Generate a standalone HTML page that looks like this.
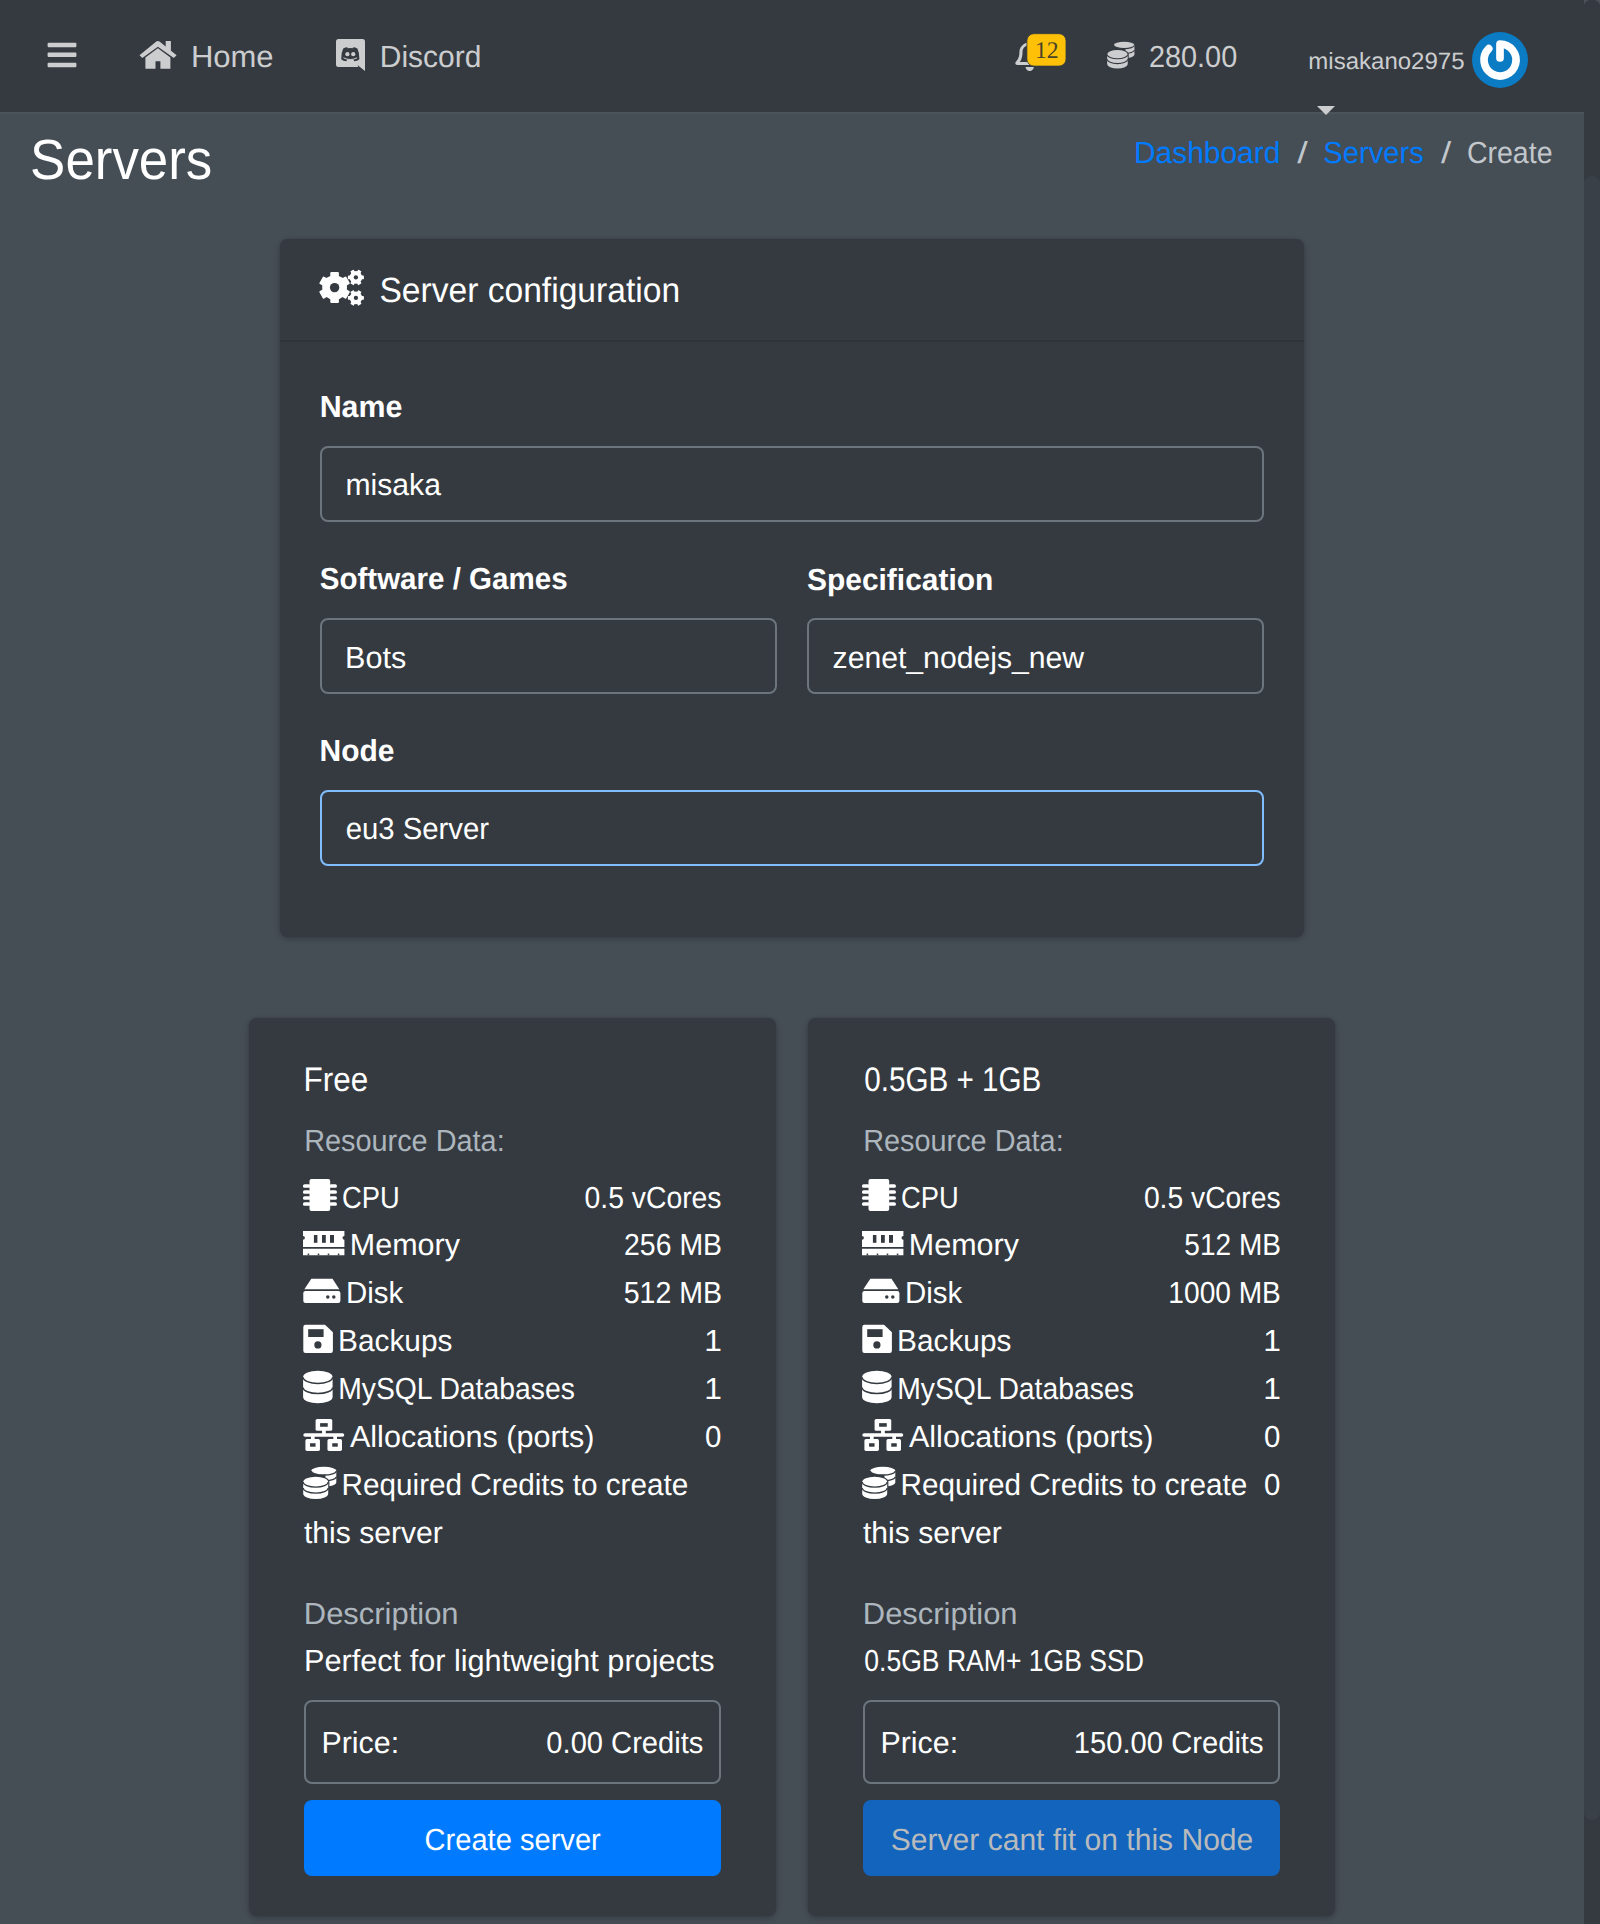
<!DOCTYPE html>
<html><head><meta charset="utf-8"><title>Servers</title>
<style>
html,body{margin:0;padding:0;}
body{width:1600px;height:1924px;overflow:hidden;background:#454d55;position:relative;font-family:'Liberation Sans',sans-serif;}
.t{position:absolute;white-space:nowrap;line-height:1;transform-origin:0 50%;text-rendering:geometricPrecision;}
.box{position:absolute;box-sizing:border-box;}
svg{position:absolute;overflow:visible;}
</style></head><body>
<div class=box style="left:0;top:0;width:1584px;height:112px;background:#343a40;"></div>
<div class=box style="left:0;top:112px;width:1584px;height:2px;background:#4b545c;"></div>
<div class=box style="left:1584px;top:0;width:16px;height:8px;background:#4a525a;"></div>
<div class=box style="left:1584px;top:0;width:16px;height:1924px;background:#343a40;border-radius:6px 6px 0 0;"></div>
<div class=box style="left:1584px;top:176px;width:16px;height:1644px;background:#3a4047;border-radius:8px;"></div>
<div class=box style="left:280px;top:239px;width:1024px;height:698px;background:#343a40;border-radius:8px;box-shadow:0 0 2px rgba(0,0,0,.125),0 2px 6px rgba(0,0,0,.2);"></div>
<div class=box style="left:280px;top:339px;width:1024px;height:1px;background:#383d44;"></div>
<div class=box style="left:280px;top:340px;width:1024px;height:1px;background:#2d3237;"></div>
<div class=box style="left:280px;top:341px;width:1024px;height:1px;background:#30353b;"></div>
<div class=box style="left:320px;top:446px;width:944px;height:76px;border:2px solid #6c757d;border-radius:8px;"></div>
<div class=box style="left:320px;top:618px;width:457px;height:76px;border:2px solid #6c757d;border-radius:8px;"></div>
<div class=box style="left:807px;top:618px;width:457px;height:76px;border:2px solid #6c757d;border-radius:8px;"></div>
<div class=box style="left:320px;top:790px;width:944px;height:76px;border:2px solid #80bdff;border-radius:8px;"></div>
<div class=box style="left:249px;top:1018px;width:527px;height:898px;background:#343a40;border-radius:8px;box-shadow:0 0 2px rgba(0,0,0,.125),0 2px 6px rgba(0,0,0,.2);"></div>
<div class=box style="left:808px;top:1018px;width:527px;height:898px;background:#343a40;border-radius:8px;box-shadow:0 0 2px rgba(0,0,0,.125),0 2px 6px rgba(0,0,0,.2);"></div>
<div class=box style="left:304px;top:1700px;width:417px;height:84px;border:2px solid #6c757d;border-radius:8px;"></div>
<div class=box style="left:863px;top:1700px;width:417px;height:84px;border:2px solid #6c757d;border-radius:8px;"></div>
<div class=box style="left:304px;top:1800px;width:417px;height:76px;background:#007bff;border-radius:8px;"></div>
<div class=box style="left:863px;top:1800px;width:417px;height:76px;background:#1264bc;border-radius:8px;"></div>

<svg style="left:0;top:0" width="1600" height="1924" viewBox="0 0 1600 1924">
<rect x="47.6" y="42.75" width="28.8" height="4.4" rx="1" fill="#cccdcf"/>
<rect x="47.6" y="52.6" width="28.8" height="4.4" rx="1" fill="#cccdcf"/>
<rect x="47.6" y="62.75" width="28.8" height="4.4" rx="1" fill="#cccdcf"/>
<path fill="#cccdcf" d="M139.5,55.3 L156.3,41.4 Q157.9,40.5 159.5,41.4 L176.6,55.3 L173.8,57.9 L157.9,46.7 L142.3,57.9 Z"/>
<path fill="#cccdcf" d="M165.7,41 H170.9 V52.5 L165.7,48.5 Z"/>
<path fill="#cccdcf" d="M145.4,57.4 L157.9,48.2 L170.4,57.4 V68.7 H160.4 V61.2 H155.5 V68.7 H145.4 Z"/>
<path fill="#cccdcf" d="M338.5,39 H362.5 Q365,39 365,41.5 V71 L357.5,65 L358.3,67 H338.5 Q336,67 336,64.5 V41.5 Q336,39 338.5,39 Z"/>
<path fill="#343a40" d="M343.2,48.6 Q345.5,47.3 347.3,47.3 L347.8,48.3 Q350.3,47.9 352.8,48.3 L353.3,47.3 Q355.1,47.3 357.4,48.6 Q359.6,53 359.4,59.3 Q357.3,61.2 354.3,61.2 L353.2,59.2 Q350.3,60 347.4,59.2 L346.3,61.2 Q343.3,61.2 341.2,59.3 Q341,53 343.2,48.6 Z"/>
<path fill="none" stroke="#cccdcf" stroke-width="1" d="M343.5,57.8 Q350.3,61.3 357.1,57.8"/>
<circle cx="347.4" cy="54.2" r="2.1" fill="#cccdcf"/><circle cx="353.25" cy="54.2" r="2.1" fill="#cccdcf"/>
<g transform="translate(1015.3,39.1) scale(0.0643,0.0625)"><path fill="#cccdcf" d="M439.39 362.29c-19.32-20.76-55.47-51.99-55.47-154.29 0-77.7-54.48-139.9-127.94-155.16V32c0-17.67-14.32-32-31.98-32s-31.98 14.33-31.98 32v20.84C118.56 68.1 64.08 130.3 64.08 208c0 102.3-36.150 133.53-55.47 154.29-6 6.45-8.66 14.160-8.61 21.71.11 16.4 12.98 32 32.1 32h383.8c19.12 0 32-15.6 32.1-32 .05-7.55-2.61-15.27-8.61-21.71zM67.53 368c21.22-27.970 44.42-74.330 44.53-159.42 0-.2-.06-.38-.06-.58 0-61.86 50.14-112 112-112s112 50.14 112 112c0 .2-.06.38-.06.58.11 85.1 23.31 131.46 44.53 159.42H67.53zM224 512c35.32 0 63.97-28.65 63.97-64H160.03c0 35.35 28.65 64 63.97 64z"/></g>
<rect x="1026.9" y="33.7" width="39.1" height="32.4" rx="7" fill="#ffc107" stroke="#343a40" stroke-width="0.8"/>
<clipPath id="cl12"><rect x="1125.48" y="45.24" width="100" height="100"/></clipPath>
<ellipse cx="1124.12" cy="45.24" rx="10.30" ry="3.38" fill="#cccdcf"/>
<path d="M1113.82,45.24 A10.30,3.38 0 0 1 1134.42,45.24 L1134.42,54.80 A10.30,3.38 0 0 1 1113.82,54.80 Z" fill="#cccdcf" clip-path="url(#cl12)"/>
<path d="M1113.82,45.24 A10.30,3.38 0 0 0 1134.42,45.24" fill="none" stroke="#343a40" stroke-width="1.07"/>
<path d="M1113.82,50.10 A10.30,3.38 0 0 0 1134.42,50.10" fill="none" stroke="#343a40" stroke-width="1.07"/>
<path d="M1107.14,54.38 A10.30,4.28 0 0 1 1127.74,54.38 L1127.74,64.11 A10.30,4.28 0 0 1 1107.14,64.11 Z" fill="#343a40" stroke="#343a40" stroke-width="1.98"/>
<path d="M1107.14,54.38 A10.30,4.28 0 0 1 1127.74,54.38 L1127.74,64.11 A10.30,4.28 0 0 1 1107.14,64.11 Z" fill="#cccdcf"/>
<path d="M1107.14,54.38 A10.30,4.28 0 0 0 1127.74,54.38" fill="none" stroke="#343a40" stroke-width="1.07"/>
<path d="M1107.14,59.33 A10.30,4.28 0 0 0 1127.74,59.33" fill="none" stroke="#343a40" stroke-width="1.07"/>
<circle cx="1500" cy="60" r="28" fill="#0b7bc4"/>
<path d="M1500,58 L1500,44 A16,16 0 1 1 1488.7,48.7" fill="none" stroke="#fff" stroke-width="7.7" stroke-linecap="round" stroke-linejoin="round"/>
<path d="M1317,106 H1335 L1326,115 Z" fill="#cccdcf"/>
<circle cx="334.6" cy="287.6" r="12.4" fill="#ffffff"/>
<rect x="330.30" y="272.10" width="8.60" height="5.10" rx="1.03" fill="#ffffff" transform="rotate(0.0 334.6 287.6)"/>
<rect x="330.30" y="272.10" width="8.60" height="5.10" rx="1.03" fill="#ffffff" transform="rotate(60.0 334.6 287.6)"/>
<rect x="330.30" y="272.10" width="8.60" height="5.10" rx="1.03" fill="#ffffff" transform="rotate(120.0 334.6 287.6)"/>
<rect x="330.30" y="272.10" width="8.60" height="5.10" rx="1.03" fill="#ffffff" transform="rotate(180.0 334.6 287.6)"/>
<rect x="330.30" y="272.10" width="8.60" height="5.10" rx="1.03" fill="#ffffff" transform="rotate(240.0 334.6 287.6)"/>
<rect x="330.30" y="272.10" width="8.60" height="5.10" rx="1.03" fill="#ffffff" transform="rotate(300.0 334.6 287.6)"/>
<circle cx="334.6" cy="287.6" r="4.7" fill="#343a40"/>
<circle cx="355.9" cy="277.4" r="6.3" fill="#ffffff"/>
<rect x="354.00" y="269.40" width="3.80" height="3.70" rx="0.46" fill="#ffffff" transform="rotate(90.0 355.9 277.4)"/>
<rect x="354.00" y="269.40" width="3.80" height="3.70" rx="0.46" fill="#ffffff" transform="rotate(150.0 355.9 277.4)"/>
<rect x="354.00" y="269.40" width="3.80" height="3.70" rx="0.46" fill="#ffffff" transform="rotate(210.0 355.9 277.4)"/>
<rect x="354.00" y="269.40" width="3.80" height="3.70" rx="0.46" fill="#ffffff" transform="rotate(270.0 355.9 277.4)"/>
<rect x="354.00" y="269.40" width="3.80" height="3.70" rx="0.46" fill="#ffffff" transform="rotate(330.0 355.9 277.4)"/>
<rect x="354.00" y="269.40" width="3.80" height="3.70" rx="0.46" fill="#ffffff" transform="rotate(390.0 355.9 277.4)"/>
<circle cx="355.9" cy="277.4" r="2.15" fill="#343a40"/>
<circle cx="355.9" cy="297.9" r="6.3" fill="#ffffff"/>
<rect x="354.00" y="289.90" width="3.80" height="3.70" rx="0.46" fill="#ffffff" transform="rotate(90.0 355.9 297.9)"/>
<rect x="354.00" y="289.90" width="3.80" height="3.70" rx="0.46" fill="#ffffff" transform="rotate(150.0 355.9 297.9)"/>
<rect x="354.00" y="289.90" width="3.80" height="3.70" rx="0.46" fill="#ffffff" transform="rotate(210.0 355.9 297.9)"/>
<rect x="354.00" y="289.90" width="3.80" height="3.70" rx="0.46" fill="#ffffff" transform="rotate(270.0 355.9 297.9)"/>
<rect x="354.00" y="289.90" width="3.80" height="3.70" rx="0.46" fill="#ffffff" transform="rotate(330.0 355.9 297.9)"/>
<rect x="354.00" y="289.90" width="3.80" height="3.70" rx="0.46" fill="#ffffff" transform="rotate(390.0 355.9 297.9)"/>
<circle cx="355.9" cy="297.9" r="2.15" fill="#343a40"/>
<rect x="309.5" y="1179" width="20.7" height="32" rx="2" fill="#ffffff"/>
<rect x="303" y="1184.2" width="7.5" height="3.6" rx="1.6" fill="#ffffff"/>
<rect x="329.4" y="1184.2" width="7.5" height="3.6" rx="1.6" fill="#ffffff"/>
<rect x="303" y="1190.2" width="7.5" height="3.6" rx="1.6" fill="#ffffff"/>
<rect x="329.4" y="1190.2" width="7.5" height="3.6" rx="1.6" fill="#ffffff"/>
<rect x="303" y="1196.2" width="7.5" height="3.6" rx="1.6" fill="#ffffff"/>
<rect x="329.4" y="1196.2" width="7.5" height="3.6" rx="1.6" fill="#ffffff"/>
<rect x="303" y="1202.2" width="7.5" height="3.6" rx="1.6" fill="#ffffff"/>
<rect x="329.4" y="1202.2" width="7.5" height="3.6" rx="1.6" fill="#ffffff"/>
<path fill="#ffffff" d="M303,1230.9 H344.4 V1235.9 A1.9,1.9 0 0 0 344.4,1239.7 V1247 H303 V1239.7 A1.9,1.9 0 0 0 303,1235.9 Z"/>
<rect x="313.9" y="1235" width="3.5" height="7.8" fill="#343a40"/>
<rect x="322" y="1235" width="3.8000000000000114" height="7.8" fill="#343a40"/>
<rect x="330" y="1235" width="4" height="7.8" fill="#343a40"/>
<path fill="#ffffff" d="M303,1248.8 H344.4 V1255.2 H303 Z"/>
<rect x="307.59999999999997" y="1253.6" width="1.6" height="1.7" fill="#343a40"/>
<rect x="317.7" y="1253.6" width="1.6" height="1.7" fill="#343a40"/>
<rect x="327.7" y="1253.6" width="1.6" height="1.7" fill="#343a40"/>
<rect x="337.8" y="1253.6" width="1.6" height="1.7" fill="#343a40"/>
<path fill="#ffffff" d="M311.3,1278.8 H332.5 L339.3,1289.3 H304.4 Z"/>
<rect x="303.3" y="1291" width="37.1" height="12" rx="2.2" fill="#ffffff"/>
<circle cx="327.8" cy="1297" r="1.75" fill="#343a40"/><circle cx="333.8" cy="1297" r="1.75" fill="#343a40"/>
<path fill="#ffffff" d="M305.5,1324.8 H325 L332.9,1332.3 V1350.8 Q332.9,1353 330.7,1353 H305.5 Q303.3,1353 303.3,1350.8 V1327 Q303.3,1324.8 305.5,1324.8 Z"/>
<rect x="308.2" y="1329.2" width="15.4" height="7.8" fill="#343a40"/>
<circle cx="317.9" cy="1344.9" r="3.6" fill="#343a40"/>
<path fill="#ffffff" d="M303.1,1377 A14.75,6.2 0 0 1 332.6,1377 V1397 A14.75,6.2 0 0 1 303.1,1397 Z"/>
<path d="M303.1,1377.2 A14.75,6.2 0 0 0 332.6,1377.2" fill="none" stroke="#343a40" stroke-width="1.5"/>
<path d="M303.1,1387.4 A14.75,6.2 0 0 0 332.6,1387.4" fill="none" stroke="#343a40" stroke-width="1.5"/>
<rect x="315.6" y="1418.95" width="16.65" height="11.85" rx="1.6" fill="#ffffff"/>
<rect x="320.1" y="1423.15" width="7.65" height="3.6" fill="#343a40"/>
<rect x="322.05" y="1430" width="3.75" height="4" fill="#ffffff"/>
<rect x="303.3" y="1433.2" width="40.95" height="3.6" rx="1.8" fill="#ffffff"/>
<rect x="310.95" y="1436" width="3.7" height="4" fill="#ffffff"/>
<rect x="305.4" y="1439.05" width="14.55" height="11.85" rx="1.6" fill="#ffffff"/>
<rect x="310.05" y="1443.25" width="5.5" height="3.45" fill="#343a40"/>
<rect x="333.3" y="1436" width="3.7" height="4" fill="#ffffff"/>
<rect x="327.45" y="1439.05" width="14.55" height="11.85" rx="1.6" fill="#ffffff"/>
<rect x="332.25" y="1443.25" width="5.5" height="3.45" fill="#343a40"/>
<clipPath id="cl85"><rect x="325.45" y="1470.90" width="100" height="100"/></clipPath>
<ellipse cx="323.80" cy="1470.90" rx="12.50" ry="4.10" fill="#ffffff"/>
<path d="M311.30,1470.90 A12.50,4.10 0 0 1 336.30,1470.90 L336.30,1482.50 A12.50,4.10 0 0 1 311.30,1482.50 Z" fill="#ffffff" clip-path="url(#cl85)"/>
<path d="M311.30,1470.90 A12.50,4.10 0 0 0 336.30,1470.90" fill="none" stroke="#343a40" stroke-width="1.30"/>
<path d="M311.30,1476.80 A12.50,4.10 0 0 0 336.30,1476.80" fill="none" stroke="#343a40" stroke-width="1.30"/>
<path d="M303.20,1482.00 A12.50,5.20 0 0 1 328.20,1482.00 L328.20,1493.80 A12.50,5.20 0 0 1 303.20,1493.80 Z" fill="#343a40" stroke="#343a40" stroke-width="2.40"/>
<path d="M303.20,1482.00 A12.50,5.20 0 0 1 328.20,1482.00 L328.20,1493.80 A12.50,5.20 0 0 1 303.20,1493.80 Z" fill="#ffffff"/>
<path d="M303.20,1482.00 A12.50,5.20 0 0 0 328.20,1482.00" fill="none" stroke="#343a40" stroke-width="1.30"/>
<path d="M303.20,1488.00 A12.50,5.20 0 0 0 328.20,1488.00" fill="none" stroke="#343a40" stroke-width="1.30"/>
<rect x="868.5" y="1179" width="20.7" height="32" rx="2" fill="#ffffff"/>
<rect x="862" y="1184.2" width="7.5" height="3.6" rx="1.6" fill="#ffffff"/>
<rect x="888.4" y="1184.2" width="7.5" height="3.6" rx="1.6" fill="#ffffff"/>
<rect x="862" y="1190.2" width="7.5" height="3.6" rx="1.6" fill="#ffffff"/>
<rect x="888.4" y="1190.2" width="7.5" height="3.6" rx="1.6" fill="#ffffff"/>
<rect x="862" y="1196.2" width="7.5" height="3.6" rx="1.6" fill="#ffffff"/>
<rect x="888.4" y="1196.2" width="7.5" height="3.6" rx="1.6" fill="#ffffff"/>
<rect x="862" y="1202.2" width="7.5" height="3.6" rx="1.6" fill="#ffffff"/>
<rect x="888.4" y="1202.2" width="7.5" height="3.6" rx="1.6" fill="#ffffff"/>
<path fill="#ffffff" d="M862,1230.9 H903.4 V1235.9 A1.9,1.9 0 0 0 903.4,1239.7 V1247 H862 V1239.7 A1.9,1.9 0 0 0 862,1235.9 Z"/>
<rect x="872.9" y="1235" width="3.5" height="7.8" fill="#343a40"/>
<rect x="881" y="1235" width="3.8000000000000114" height="7.8" fill="#343a40"/>
<rect x="889" y="1235" width="4" height="7.8" fill="#343a40"/>
<path fill="#ffffff" d="M862,1248.8 H903.4 V1255.2 H862 Z"/>
<rect x="866.5999999999999" y="1253.6" width="1.6" height="1.7" fill="#343a40"/>
<rect x="876.7" y="1253.6" width="1.6" height="1.7" fill="#343a40"/>
<rect x="886.7" y="1253.6" width="1.6" height="1.7" fill="#343a40"/>
<rect x="896.8" y="1253.6" width="1.6" height="1.7" fill="#343a40"/>
<path fill="#ffffff" d="M870.3,1278.8 H891.5 L898.3,1289.3 H863.4 Z"/>
<rect x="862.3" y="1291" width="37.1" height="12" rx="2.2" fill="#ffffff"/>
<circle cx="886.8" cy="1297" r="1.75" fill="#343a40"/><circle cx="892.8" cy="1297" r="1.75" fill="#343a40"/>
<path fill="#ffffff" d="M864.5,1324.8 H884 L891.9,1332.3 V1350.8 Q891.9,1353 889.7,1353 H864.5 Q862.3,1353 862.3,1350.8 V1327 Q862.3,1324.8 864.5,1324.8 Z"/>
<rect x="867.2" y="1329.2" width="15.4" height="7.8" fill="#343a40"/>
<circle cx="876.9" cy="1344.9" r="3.6" fill="#343a40"/>
<path fill="#ffffff" d="M862.1,1377 A14.75,6.2 0 0 1 891.6,1377 V1397 A14.75,6.2 0 0 1 862.1,1397 Z"/>
<path d="M862.1,1377.2 A14.75,6.2 0 0 0 891.6,1377.2" fill="none" stroke="#343a40" stroke-width="1.5"/>
<path d="M862.1,1387.4 A14.75,6.2 0 0 0 891.6,1387.4" fill="none" stroke="#343a40" stroke-width="1.5"/>
<rect x="874.6" y="1418.95" width="16.65" height="11.85" rx="1.6" fill="#ffffff"/>
<rect x="879.1" y="1423.15" width="7.65" height="3.6" fill="#343a40"/>
<rect x="881.05" y="1430" width="3.75" height="4" fill="#ffffff"/>
<rect x="862.3" y="1433.2" width="40.95" height="3.6" rx="1.8" fill="#ffffff"/>
<rect x="869.95" y="1436" width="3.7" height="4" fill="#ffffff"/>
<rect x="864.4" y="1439.05" width="14.55" height="11.85" rx="1.6" fill="#ffffff"/>
<rect x="869.05" y="1443.25" width="5.5" height="3.45" fill="#343a40"/>
<rect x="892.3" y="1436" width="3.7" height="4" fill="#ffffff"/>
<rect x="886.45" y="1439.05" width="14.55" height="11.85" rx="1.6" fill="#ffffff"/>
<rect x="891.25" y="1443.25" width="5.5" height="3.45" fill="#343a40"/>
<clipPath id="cl131"><rect x="884.45" y="1470.90" width="100" height="100"/></clipPath>
<ellipse cx="882.80" cy="1470.90" rx="12.50" ry="4.10" fill="#ffffff"/>
<path d="M870.30,1470.90 A12.50,4.10 0 0 1 895.30,1470.90 L895.30,1482.50 A12.50,4.10 0 0 1 870.30,1482.50 Z" fill="#ffffff" clip-path="url(#cl131)"/>
<path d="M870.30,1470.90 A12.50,4.10 0 0 0 895.30,1470.90" fill="none" stroke="#343a40" stroke-width="1.30"/>
<path d="M870.30,1476.80 A12.50,4.10 0 0 0 895.30,1476.80" fill="none" stroke="#343a40" stroke-width="1.30"/>
<path d="M862.20,1482.00 A12.50,5.20 0 0 1 887.20,1482.00 L887.20,1493.80 A12.50,5.20 0 0 1 862.20,1493.80 Z" fill="#343a40" stroke="#343a40" stroke-width="2.40"/>
<path d="M862.20,1482.00 A12.50,5.20 0 0 1 887.20,1482.00 L887.20,1493.80 A12.50,5.20 0 0 1 862.20,1493.80 Z" fill="#ffffff"/>
<path d="M862.20,1482.00 A12.50,5.20 0 0 0 887.20,1482.00" fill="none" stroke="#343a40" stroke-width="1.30"/>
<path d="M862.20,1488.00 A12.50,5.20 0 0 0 887.20,1488.00" fill="none" stroke="#343a40" stroke-width="1.30"/>
</svg>
<div class=t style="left:190px;top:42px;font-size:30.5px;color:#cccdcf;font-weight:400;font-family:'Liberation Sans',sans-serif;transform:translate(0.888px,0.000px) scaleX(1.0167);">Home</div>
<div class=t style="left:379px;top:42px;font-size:30.5px;color:#cccdcf;font-weight:400;font-family:'Liberation Sans',sans-serif;transform:translate(0.779px,0.000px) scaleX(0.9829);">Discord</div>
<div class=t style="left:1148px;top:42px;font-size:30.5px;color:#cccdcf;font-weight:400;font-family:'Liberation Sans',sans-serif;transform:translate(0.933px,0.000px) scaleX(0.9465);">280.00</div>
<div class=t style="left:1308px;top:50px;font-size:23.52px;color:#cccdcf;font-weight:400;font-family:'Liberation Sans',sans-serif;transform:translate(0.345px,0.000px) scaleX(1.0211);">misakano2975</div>
<div class=t style="left:1034px;top:40px;font-size:23.91px;color:#4a4428;font-weight:400;font-family:'Liberation Serif',serif;transform:translate(0.894px,0.000px) scaleX(0.9926);">12</div>
<div class=t style="left:30px;top:133px;font-size:56.68px;color:#fff;font-weight:400;font-family:'Liberation Sans',sans-serif;transform:translate(0.117px,0.000px) scaleX(0.9331);">Servers</div>
<div class=t style="left:1133px;top:138px;font-size:30.5px;color:#007bff;font-weight:400;font-family:'Liberation Sans',sans-serif;transform:translate(0.922px,0.000px) scaleX(0.9811);">Dashboard</div>
<div class=t style="left:1297px;top:138px;font-size:30.5px;color:#c2c7cc;font-weight:400;font-family:'Liberation Sans',sans-serif;transform:translate(0.136px,0.000px) scaleX(1.2353);">/</div>
<div class=t style="left:1323px;top:138px;font-size:30.5px;color:#007bff;font-weight:400;font-family:'Liberation Sans',sans-serif;transform:translate(0.252px,0.000px) scaleX(0.9570);">Servers</div>
<div class=t style="left:1440px;top:138px;font-size:30.5px;color:#c2c7cc;font-weight:400;font-family:'Liberation Sans',sans-serif;transform:translate(0.985px,0.000px) scaleX(1.2081);">/</div>
<div class=t style="left:1466px;top:138px;font-size:30.5px;color:#c2c7cc;font-weight:400;font-family:'Liberation Sans',sans-serif;transform:translate(0.883px,0.000px) scaleX(0.9352);">Create</div>
<div class=t style="left:379px;top:274px;font-size:34.93px;color:#fff;font-weight:400;font-family:'Liberation Sans',sans-serif;transform:translate(0.395px,0.000px) scaleX(0.9621);">Server configuration</div>
<div class=t style="left:319px;top:392px;font-size:30.5px;color:#fff;font-weight:700;font-family:'Liberation Sans',sans-serif;transform:translate(0.671px,0.000px) scaleX(0.9956);">Name</div>
<div class=t style="left:345px;top:470px;font-size:30.5px;color:#fff;font-weight:400;font-family:'Liberation Sans',sans-serif;transform:translate(0.427px,0.000px) scaleX(0.9886);">misaka</div>
<div class=t style="left:319px;top:564px;font-size:30.5px;color:#fff;font-weight:700;font-family:'Liberation Sans',sans-serif;transform:translate(0.693px,0.000px) scaleX(0.9689);">Software / Games</div>
<div class=t style="left:806px;top:565px;font-size:30.5px;color:#fff;font-weight:700;font-family:'Liberation Sans',sans-serif;transform:translate(0.986px,0.000px) scaleX(0.9815);">Specification</div>
<div class=t style="left:345px;top:643px;font-size:30.5px;color:#fff;font-weight:400;font-family:'Liberation Sans',sans-serif;transform:translate(0.031px,0.000px) scaleX(1.0027);">Bots</div>
<div class=t style="left:832px;top:643px;font-size:30.5px;color:#fff;font-weight:400;font-family:'Liberation Sans',sans-serif;transform:translate(0.546px,0.000px) scaleX(0.9889);">zenet_nodejs_new</div>
<div class=t style="left:319px;top:736px;font-size:30.5px;color:#fff;font-weight:700;font-family:'Liberation Sans',sans-serif;transform:translate(0.616px,0.000px) scaleX(0.9824);">Node</div>
<div class=t style="left:345px;top:814px;font-size:30.5px;color:#fff;font-weight:400;font-family:'Liberation Sans',sans-serif;transform:translate(0.668px,0.000px) scaleX(0.9606);">eu3 Server</div>
<div class=t style="left:303px;top:1063px;font-size:34.05px;color:#fff;font-weight:400;font-family:'Liberation Sans',sans-serif;transform:translate(0.618px,0.000px) scaleX(0.9240);">Free</div>
<div class=t style="left:304px;top:1126px;font-size:30.5px;color:#adb5bd;font-weight:400;font-family:'Liberation Sans',sans-serif;transform:translate(0.142px,0.000px) scaleX(0.9462);">Resource Data:</div>
<div class=t style="left:341px;top:1183px;font-size:30.5px;color:#fff;font-weight:400;font-family:'Liberation Sans',sans-serif;transform:translate(1.000px,0.000px) scaleX(0.8952);">CPU</div>
<div class=t style="left:584px;top:1183px;font-size:30.5px;color:#fff;font-weight:400;font-family:'Liberation Sans',sans-serif;transform:translate(0.588px,0.000px) scaleX(0.9285);">0.5 vCores</div>
<div class=t style="left:349px;top:1230px;font-size:30.5px;color:#fff;font-weight:400;font-family:'Liberation Sans',sans-serif;transform:translate(0.831px,0.000px) scaleX(0.9993);">Memory</div>
<div class=t style="left:624px;top:1230px;font-size:30.5px;color:#fff;font-weight:400;font-family:'Liberation Sans',sans-serif;transform:translate(0.052px,0.000px) scaleX(0.9320);">256 MB</div>
<div class=t style="left:345px;top:1278px;font-size:30.5px;color:#fff;font-weight:400;font-family:'Liberation Sans',sans-serif;transform:translate(0.947px,0.000px) scaleX(0.9657);">Disk</div>
<div class=t style="left:623px;top:1278px;font-size:30.5px;color:#fff;font-weight:400;font-family:'Liberation Sans',sans-serif;transform:translate(0.724px,0.000px) scaleX(0.9352);">512 MB</div>
<div class=t style="left:337px;top:1326px;font-size:30.5px;color:#fff;font-weight:400;font-family:'Liberation Sans',sans-serif;transform:translate(0.995px,0.000px) scaleX(0.9778);">Backups</div>
<div class=t style="left:704px;top:1326px;font-size:30.5px;color:#fff;font-weight:400;font-family:'Liberation Sans',sans-serif;transform:translate(0.259px,0.000px) scaleX(1.0402);">1</div>
<div class=t style="left:338px;top:1374px;font-size:30.5px;color:#fff;font-weight:400;font-family:'Liberation Sans',sans-serif;transform:translate(0.144px,0.000px) scaleX(0.9287);">MySQL Databases</div>
<div class=t style="left:704px;top:1374px;font-size:30.5px;color:#fff;font-weight:400;font-family:'Liberation Sans',sans-serif;transform:translate(0.259px,0.000px) scaleX(1.0402);">1</div>
<div class=t style="left:349px;top:1422px;font-size:30.5px;color:#fff;font-weight:400;font-family:'Liberation Sans',sans-serif;transform:translate(0.914px,0.000px) scaleX(1.0022);">Allocations (ports)</div>
<div class=t style="left:704px;top:1422px;font-size:30.5px;color:#fff;font-weight:400;font-family:'Liberation Sans',sans-serif;transform:translate(0.933px,0.000px) scaleX(0.9662);">0</div>
<div class=t style="left:341px;top:1470px;font-size:30.5px;color:#fff;font-weight:400;font-family:'Liberation Sans',sans-serif;transform:translate(0.597px,0.000px) scaleX(0.9737);">Required Credits to create</div>
<div class=t style="left:303px;top:1518px;font-size:30.5px;color:#fff;font-weight:400;font-family:'Liberation Sans',sans-serif;transform:translate(0.911px,0.000px) scaleX(0.9871);">this server</div>
<div class=t style="left:303px;top:1599px;font-size:30.5px;color:#adb5bd;font-weight:400;font-family:'Liberation Sans',sans-serif;transform:translate(0.835px,0.000px) scaleX(1.0141);">Description</div>
<div class=t style="left:303px;top:1646px;font-size:30.5px;color:#fff;font-weight:400;font-family:'Liberation Sans',sans-serif;transform:translate(0.992px,0.000px) scaleX(1.0053);">Perfect for lightweight projects</div>
<div class=t style="left:321px;top:1728px;font-size:30.5px;color:#fff;font-weight:400;font-family:'Liberation Sans',sans-serif;transform:translate(0.483px,0.000px) scaleX(0.9952);">Price:</div>
<div class=t style="left:546px;top:1728px;font-size:30.5px;color:#fff;font-weight:400;font-family:'Liberation Sans',sans-serif;transform:translate(0.341px,0.000px) scaleX(0.9548);">0.00 Credits</div>
<div class=t style="left:424px;top:1825px;font-size:30.5px;color:#fff;font-weight:400;font-family:'Liberation Sans',sans-serif;transform:translate(0.577px,0.000px) scaleX(0.9536);">Create server</div>
<div class=t style="left:864px;top:1063px;font-size:34.05px;color:#fff;font-weight:400;font-family:'Liberation Sans',sans-serif;transform:translate(0.173px,0.000px) scaleX(0.8708);">0.5GB + 1GB</div>
<div class=t style="left:863px;top:1126px;font-size:30.5px;color:#adb5bd;font-weight:400;font-family:'Liberation Sans',sans-serif;transform:translate(0.142px,0.000px) scaleX(0.9462);">Resource Data:</div>
<div class=t style="left:900px;top:1183px;font-size:30.5px;color:#fff;font-weight:400;font-family:'Liberation Sans',sans-serif;transform:translate(1.000px,0.000px) scaleX(0.8952);">CPU</div>
<div class=t style="left:1143px;top:1183px;font-size:30.5px;color:#fff;font-weight:400;font-family:'Liberation Sans',sans-serif;transform:translate(0.900px,0.000px) scaleX(0.9265);">0.5 vCores</div>
<div class=t style="left:908px;top:1230px;font-size:30.5px;color:#fff;font-weight:400;font-family:'Liberation Sans',sans-serif;transform:translate(0.831px,0.000px) scaleX(0.9993);">Memory</div>
<div class=t style="left:1184px;top:1230px;font-size:30.5px;color:#fff;font-weight:400;font-family:'Liberation Sans',sans-serif;transform:translate(0.360px,0.000px) scaleX(0.9191);">512 MB</div>
<div class=t style="left:904px;top:1278px;font-size:30.5px;color:#fff;font-weight:400;font-family:'Liberation Sans',sans-serif;transform:translate(0.947px,0.000px) scaleX(0.9657);">Disk</div>
<div class=t style="left:1168px;top:1278px;font-size:30.5px;color:#fff;font-weight:400;font-family:'Liberation Sans',sans-serif;transform:translate(0.369px,0.000px) scaleX(0.9215);">1000 MB</div>
<div class=t style="left:896px;top:1326px;font-size:30.5px;color:#fff;font-weight:400;font-family:'Liberation Sans',sans-serif;transform:translate(0.995px,0.000px) scaleX(0.9778);">Backups</div>
<div class=t style="left:1263px;top:1326px;font-size:30.5px;color:#fff;font-weight:400;font-family:'Liberation Sans',sans-serif;transform:translate(0.259px,0.000px) scaleX(1.0402);">1</div>
<div class=t style="left:897px;top:1374px;font-size:30.5px;color:#fff;font-weight:400;font-family:'Liberation Sans',sans-serif;transform:translate(0.144px,0.000px) scaleX(0.9287);">MySQL Databases</div>
<div class=t style="left:1263px;top:1374px;font-size:30.5px;color:#fff;font-weight:400;font-family:'Liberation Sans',sans-serif;transform:translate(0.259px,0.000px) scaleX(1.0402);">1</div>
<div class=t style="left:908px;top:1422px;font-size:30.5px;color:#fff;font-weight:400;font-family:'Liberation Sans',sans-serif;transform:translate(0.914px,0.000px) scaleX(1.0022);">Allocations (ports)</div>
<div class=t style="left:1263px;top:1422px;font-size:30.5px;color:#fff;font-weight:400;font-family:'Liberation Sans',sans-serif;transform:translate(0.933px,0.000px) scaleX(0.9662);">0</div>
<div class=t style="left:900px;top:1470px;font-size:30.5px;color:#fff;font-weight:400;font-family:'Liberation Sans',sans-serif;transform:translate(0.597px,0.000px) scaleX(0.9737);">Required Credits to create</div>
<div class=t style="left:1263px;top:1470px;font-size:30.5px;color:#fff;font-weight:400;font-family:'Liberation Sans',sans-serif;transform:translate(0.933px,0.000px) scaleX(0.9662);">0</div>
<div class=t style="left:862px;top:1518px;font-size:30.5px;color:#fff;font-weight:400;font-family:'Liberation Sans',sans-serif;transform:translate(0.911px,0.000px) scaleX(0.9871);">this server</div>
<div class=t style="left:862px;top:1599px;font-size:30.5px;color:#adb5bd;font-weight:400;font-family:'Liberation Sans',sans-serif;transform:translate(0.835px,0.000px) scaleX(1.0141);">Description</div>
<div class=t style="left:864px;top:1646px;font-size:30.5px;color:#fff;font-weight:400;font-family:'Liberation Sans',sans-serif;transform:translate(0.338px,0.000px) scaleX(0.8700);">0.5GB RAM+ 1GB SSD</div>
<div class=t style="left:880px;top:1728px;font-size:30.5px;color:#fff;font-weight:400;font-family:'Liberation Sans',sans-serif;transform:translate(0.483px,0.000px) scaleX(0.9952);">Price:</div>
<div class=t style="left:1073px;top:1728px;font-size:30.5px;color:#fff;font-weight:400;font-family:'Liberation Sans',sans-serif;transform:translate(0.814px,0.000px) scaleX(0.9565);">150.00 Credits</div>
<div class=t style="left:890px;top:1825px;font-size:30.5px;color:#b8babc;font-weight:400;font-family:'Liberation Sans',sans-serif;transform:translate(0.762px,0.000px) scaleX(0.9855);">Server cant fit on this Node</div>
</body></html>
